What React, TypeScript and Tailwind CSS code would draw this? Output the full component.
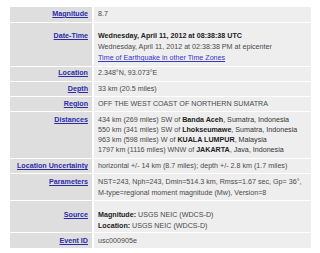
import type { ReactNode } from 'react'

type Row = {
  label: string
  h: string
  pt: string
  lh: string
  value: ReactNode
}

const rows: Row[] = [
  { label: 'Magnitude', h: 'h-[15px]', pt: 'pt-[2px]', lh: 'leading-[11px]', value: '8.7' },
  {
    label: 'Date-Time',
    h: 'h-[43px]',
    pt: 'pt-[8px]',
    lh: 'leading-[11px]',
    value: (
      <>
        <b className="text-[#222]">Wednesday, April 11, 2012 at 08:38:38 UTC</b>
        <br />
        Wednesday, April 11, 2012 at 02:38:38 PM at epicenter
        <br />
        <a href="#" className="text-[#3535c8] underline">
          Time of Earthquake in other Time Zones
        </a>
      </>
    ),
  },
  { label: 'Location', h: 'h-[14px]', pt: 'pt-[1px]', lh: 'leading-[11px]', value: '2.348°N, 93.073°E' },
  { label: 'Depth', h: 'h-[14px]', pt: 'pt-[1.5px]', lh: 'leading-[11px]', value: '33 km (20.5 miles)' },
  { label: 'Region', h: 'h-[14px]', pt: 'pt-[1.5px]', lh: 'leading-[11px]', value: 'OFF THE WEST COAST OF NORTHERN SUMATRA' },
  {
    label: 'Distances',
    h: 'h-[46px]',
    pt: 'pt-[2.5px]',
    lh: 'leading-[10px]',
    value: (
      <>
        434 km (269 miles) SW of <b className="text-[#222]">Banda Aceh</b>
        <span className="text-[#333]">, Sumatra, Indonesia</span>
        <br />
        550 km (341 miles) SW of <b className="text-[#222]">Lhokseumawe</b>
        <span className="text-[#333]">, Sumatra, Indonesia</span>
        <br />
        963 km (598 miles) W of <b className="text-[#222]">KUALA LUMPUR</b>
        <span className="text-[#333]">, Malaysia</span>
        <br />
        1797 km (1116 miles) WNW of <b className="text-[#222]">JAKARTA</b>
        <span className="text-[#333]">, Java, Indonesia</span>
      </>
    ),
  },
  {
    label: 'Location Uncertainty',
    h: 'h-[14px]',
    pt: 'pt-[2px]',
    lh: 'leading-[11px]',
    value: 'horizontal +/- 14 km (8.7 miles); depth +/- 2.8 km (1.7 miles)',
  },
  {
    label: 'Parameters',
    h: 'h-[26px]',
    pt: 'pt-[2.5px]',
    lh: 'leading-[11.5px]',
    value: (
      <>
        NST=243, Nph=243, Dmin=514.3 km, Rmss=1.67 sec, Gp= 36°,
        <br />
        M-type=regional moment magnitude (Mw), Version=8
      </>
    ),
  },
  {
    label: 'Source',
    h: 'h-[31px]',
    pt: 'pt-[8.5px]',
    lh: 'leading-[11px]',
    value: (
      <>
        <b className="text-[#222]">Magnitude:</b> USGS NEIC (WDCS-D)
        <br />
        <b className="text-[#222]">Location:</b> USGS NEIC (WDCS-D)
      </>
    ),
  },
  { label: 'Event ID', h: 'h-[15px]', pt: 'pt-[2.5px]', lh: 'leading-[11px]', value: 'usc000905e' },
]

export default function App() {
  return (
    <div
      className="w-[320px] h-[253px] bg-white pl-[10px] pt-[7px] text-[7.15px] text-[#4a4a4a]"
      style={{ fontFamily: '"Liberation Sans", Arial, sans-serif' }}
    >
      <div className="grid grid-cols-[82px_217px] gap-x-[2px] gap-y-[1px]">
        {rows.map((r) => (
          <div key={r.label} className="contents">
            <div className={`${r.h} ${r.pt} ${r.lh} bg-[#dedede] pr-[4px] text-right`}>
              <a href="#" className="font-bold text-[#2b2ba8] underline">
                {r.label}
              </a>
            </div>
            <div className={`${r.h} ${r.pt} ${r.lh} bg-[#eeeeee] pl-[4px] whitespace-nowrap`}>{r.value}</div>
          </div>
        ))}
      </div>
    </div>
  )
}
